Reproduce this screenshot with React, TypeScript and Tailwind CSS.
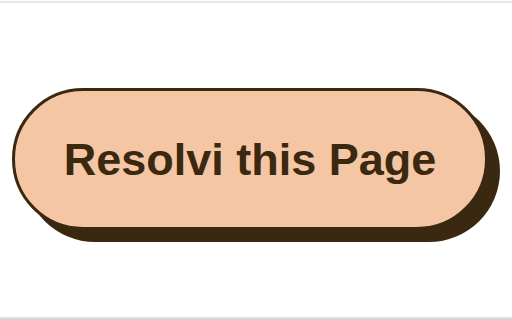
import React from 'react';

const App: React.FC = () => {
  return (
    <div className="w-[512px] h-[320px] bg-white flex flex-col overflow-hidden">
      <div className="h-px bg-white" />
      <div className="h-[2px] bg-[#e8e8e8]" />
      <div className="flex-1 flex items-start pl-3 pt-[85px]">
        <button
          type="button"
          className="w-[476px] h-[142px] rounded-full border-[3px] border-[#3b2810] bg-[#f5c6a4] shadow-[12px_12px_0_#3b2810] flex items-center justify-center"
        >
          <span
            className="text-[45px] font-bold text-[#3b2810] leading-none"
            style={{ fontFamily: '"Liberation Sans", Arial, sans-serif' }}
          >
            Resolvi this Page
          </span>
        </button>
      </div>
      <div className="h-[3px] bg-gradient-to-b from-[#e6e6e6] to-[#d0d0d0]" />
    </div>
  );
};

export default App;
